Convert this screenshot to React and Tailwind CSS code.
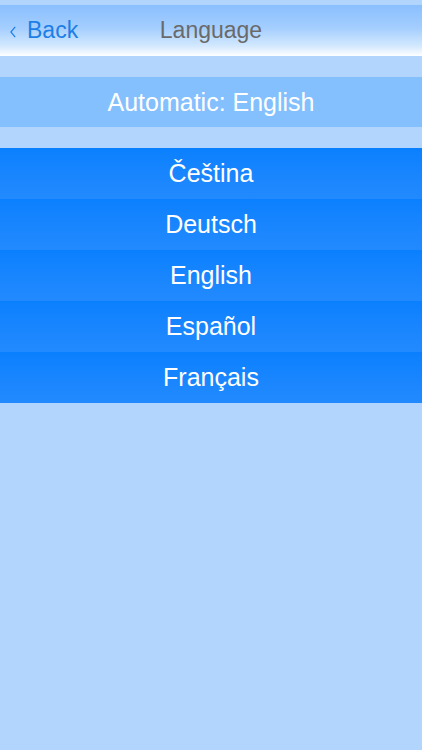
import React from "react";

const languages = ["Čeština", "Deutsch", "English", "Español", "Français"];

export default function App() {
  return (
    <div
      className="w-[422px] h-[750px] bg-[#b2d5fe] overflow-hidden"
      style={{ fontFamily: '"Liberation Sans", Arial, sans-serif' }}
    >
      {/* Status strip */}
      <div className="h-[5px]" />

      {/* Nav bar */}
      <div className="relative h-[51px] flex items-center justify-center bg-[linear-gradient(to_bottom,#8abffe_0%,#a4cefe_45%,#d2e8fe_80%,#ffffff_100%)]">
        <div className="absolute left-[10px] top-0 h-full flex items-center gap-[11px]">
          <svg width="6" height="12" viewBox="0 0 6 12" fill="none" className="mt-[2px]">
            <path d="M5.2 0.8 L0.9 6 L5.2 11.2" stroke="#1c7fe6" strokeWidth="1.2" />
          </svg>
          <span className="text-[23px] leading-none text-[#1c7fe6]">Back</span>
        </div>
        <span className="text-[23px] text-[#6a6a6a] leading-none">Language</span>
      </div>

      <div className="h-[21px]" />

      {/* Automatic row */}
      <div className="h-[50px] bg-[#84bffe] flex items-center justify-center">
        <span className="text-[25px] text-white leading-none">Automatic: English</span>
      </div>

      <div className="h-[21px]" />

      {/* Language list */}
      <div className="flex flex-col">
        {languages.map((lang) => (
          <div
            key={lang}
            className="h-[51px] flex items-center justify-center bg-gradient-to-b from-[#0a80fe] to-[#228afe]"
          >
            <span className="text-[25px] text-white leading-none">{lang}</span>
          </div>
        ))}
      </div>
    </div>
  );
}
